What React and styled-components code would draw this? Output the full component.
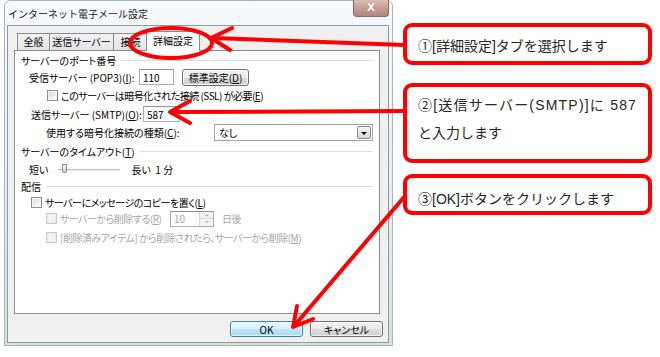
import React from 'react'
import styled, { createGlobalStyle } from 'styled-components'

const GlobalStyle = createGlobalStyle`
  html, body { margin: 0; padding: 0; background: #fff; }
  body { font-family: "Noto Sans CJK JP", "Noto Sans", sans-serif; }
`

const Page = styled.div`
  position: relative;
  width: 660px;
  height: 357px;
  display: flex;
  align-items: flex-start;
  overflow: hidden;
`

const Window = styled.div`
  width: 389px;
  height: 346px;
  margin-left: 4px;
  box-sizing: border-box;
  display: flex;
  flex-direction: column;
  border: 1px solid #a7b4bf;
  border-radius: 6px 6px 0 0;
  background: linear-gradient(180deg, #f6f9fb 0%, #eaf0f4 45%, #dde8ee 80%, #d4e5c9 100%);
`

const TitleBar = styled.div`
  height: 24px;
  display: flex;
  justify-content: space-between;
  align-items: flex-start;
  padding-left: 3px;
`

const Title = styled.span`
  margin-top: 6px;
  font-size: 10px;
  line-height: 14px;
  color: #1b1b1b;
`

const CloseButton = styled.div`
  width: 36px;
  height: 17px;
  margin: -1px 3px 0 0;
  box-sizing: border-box;
  border: 1px solid #8c6a64;
  border-top: none;
  border-radius: 0 0 4px 4px;
  background: linear-gradient(180deg, #dcbdb6 0%, #c89d94 50%, #b3867c 100%);
  color: #fff;
  font: bold 11px/15px "DejaVu Sans", sans-serif;
  text-align: center;
  text-shadow: 0 0 1px #6d4a44;
`

const Client = styled.div`
  flex: 1;
  margin: 0 3px 2px 2px;
  border: 1px solid #8d99a4;
  background: #f0f0f0;
  display: flex;
  flex-direction: column;
  font-feature-settings: "palt";
`

const TabStrip = styled.div`
  position: relative;
  z-index: 2;
  height: 25px;
  box-sizing: border-box;
  display: flex;
  align-items: flex-end;
  padding-left: 9px;
`

const Tab = styled.div`
  box-sizing: border-box;
  width: ${p => p.w}px;
  height: ${p => (p.active ? 20 : 17)}px;
  margin-left: ${p => (p.active ? -2 : p.first ? 0 : -1)}px;
  margin-bottom: ${p => (p.active ? 0 : 1)}px;
  border: 1px solid #898c95;
  border-bottom: none;
  background: ${p => (p.active ? '#fff' : 'linear-gradient(180deg, #f3f3f3, #e4e4e4)')};
  font-size: 10px;
  line-height: ${p => (p.active ? 18 : 16)}px;
  text-align: center;
  color: #000;
`

const Panel = styled.div`
  position: relative;
  z-index: 1;
  height: 264px;
  margin: -1px 8px 0 6px;
  box-sizing: border-box;
  border: 1px solid #898c95;
  background: #fff;
  padding: 1px 6px 0 6px;
`

const Row = styled.div`
  display: flex;
  align-items: center;
  height: ${p => p.h}px;
  padding-left: ${p => p.indent || 0}px;
  font-size: 10px;
  letter-spacing: ${p => (p.tight ? '-0.5px' : 'normal')};
  color: ${p => (p.disabled ? '#a6a6a6' : '#000')};
  white-space: nowrap;
`

const GroupHead = styled(Row)`
  &::after {
    content: '';
    flex: 1;
    height: 1px;
    margin-left: 5px;
    background: #d5dfe5;
  }
`

const Label = styled.span`
  display: inline-block;
  flex: none;
  width: ${p => p.w}px;
`

const U = styled.span`
  text-decoration: underline;
`

const TextBox = styled.div`
  box-sizing: border-box;
  width: ${p => p.w}px;
  height: 16px;
  padding-left: 3px;
  display: flex;
  align-items: center;
  border: 1px solid #abadb3;
  border-top-color: #8e9096;
  background: #fff;
  color: ${p => (p.disabled ? '#a6a6a6' : '#000')};
  font-size: 10px;
  letter-spacing: normal;
  position: relative;
`

const PushButton = styled.div`
  box-sizing: border-box;
  width: ${p => p.w}px;
  height: ${p => p.h || 17}px;
  margin-left: ${p => p.ml || 0}px;
  border: 1px solid ${p => (p.primary ? '#3c7fb1' : '#707070')};
  border-radius: 3px;
  background: ${p =>
    p.primary
      ? 'linear-gradient(180deg, #eaf6fd 0%, #d9f0fc 50%, #bee6fd 51%, #a7d9f5 100%)'
      : 'linear-gradient(180deg, #f2f2f2 0%, #ebebeb 50%, #dddddd 51%, #cfcfcf 100%)'};
  box-shadow: inset 0 0 0 1px rgba(255, 255, 255, 0.7);
  font-size: 10px;
  display: flex;
  align-items: center;
  justify-content: center;
  color: #000;
`

const Check = styled.span`
  box-sizing: border-box;
  width: 11px;
  height: 11px;
  margin-right: 3px;
  flex: none;
  border: 1px solid ${p => (p.disabled ? '#c9c9c9' : '#8f8f8f')};
  background: ${p =>
    p.disabled ? '#f4f4f4' : 'linear-gradient(135deg, #d6d6d6 0%, #f0f0f0 60%, #fff 100%)'};
  box-shadow: inset 0 0 0 1px ${p => (p.disabled ? '#ececec' : '#f4f4f4')};
`

const Select = styled.div`
  box-sizing: border-box;
  width: 159px;
  height: 17px;
  display: flex;
  align-items: center;
  justify-content: space-between;
  padding: 0 1px 0 4px;
  border: 1px solid #a5a5a5;
  background: #fff;
  font-size: 10px;
`

const DropArrow = styled.span`
  box-sizing: border-box;
  width: 14px;
  height: 13px;
  border: 1px solid #8b8b8b;
  border-radius: 2px;
  background: linear-gradient(180deg, #f4f4f4, #d8d8d8);
  display: flex;
  align-items: center;
  justify-content: center;
  &::after {
    content: '';
    margin-top: 2px;
    border-left: 3px solid transparent;
    border-right: 3px solid transparent;
    border-top: 3px solid #000;
  }
`

const Spin = styled.span`
  position: absolute;
  right: 0;
  top: 0;
  bottom: 0;
  width: 13px;
  display: flex;
  flex-direction: column;
  border-left: 1px solid #d4d4d4;
`

const SpinHalf = styled.span`
  flex: 1;
  background: #f3f3f3;
  border-bottom: ${p => (p.top ? '1px solid #dcdcdc' : 'none')};
  display: flex;
  align-items: center;
  justify-content: center;
  &::after {
    content: '';
    border-left: 2px solid transparent;
    border-right: 2px solid transparent;
    ${p => (p.top ? 'border-bottom: 2px solid #b5b5b5;' : 'border-top: 2px solid #b5b5b5;')}
  }
`

const Slider = styled.div`
  position: relative;
  width: 62px;
  height: 14px;
  margin: 0 11px 0 10px;
  &::before {
    content: '';
    position: absolute;
    left: 0;
    right: 0;
    top: 6px;
    height: 1px;
    background: #b9b9b9;
    border-bottom: 1px solid #eee;
  }
`

const Thumb = styled.span`
  position: absolute;
  left: 4px;
  top: 1px;
  width: 5px;
  height: 9px;
  box-sizing: border-box;
  border: 1px solid #8c8c8c;
  border-radius: 1px 1px 3px 3px;
  background: linear-gradient(180deg, #f4f4f4, #d6d6d6);
`

const ButtonRow = styled.div`
  display: flex;
  justify-content: flex-end;
  gap: 7px;
  padding: 7px 5px 0 0;
`

const Notes = styled.div`
  display: flex;
  flex-direction: column;
  width: 249px;
  margin-left: 10px;
  padding-top: 23px;
  font-family: "Liberation Sans", "Noto Sans CJK JP", sans-serif;
`

const Note = styled.div`
  box-sizing: border-box;
  height: ${p => p.h}px;
  margin-top: ${p => p.mt || 0}px;
  padding: ${p => p.pt}px 8px 0 11px;
  border: 4px solid #ff0000;
  border-radius: 9px;
  background: #fff;
  font-size: 14px;
  line-height: ${p => p.lh || 20}px;
  color: #262626;
  white-space: nowrap;
`

const WideLine = styled.span`
  letter-spacing: 1.2px;
`

const Overlay = styled.svg`
  position: absolute;
  z-index: 10;
  left: 0;
  top: 0;
  pointer-events: none;
`

const App = () => {
  return (
    <Page>
      <GlobalStyle />

      <Window>
        <TitleBar>
          <Title>インターネット電子メール設定</Title>
          <CloseButton>X</CloseButton>
        </TitleBar>

        <Client>
          <TabStrip>
            <Tab w={33} first>全般</Tab>
            <Tab w={65}>送信サーバー</Tab>
            <Tab w={35}>接続</Tab>
            <Tab w={54} active>詳細設定</Tab>
          </TabStrip>

          <Panel>
            <GroupHead h={16}>サーバーのポート番号</GroupHead>

            <Row h={18} indent={8}>
              <Label w={110}>受信サーバー (POP3)(<U>I</U>):</Label>
              <TextBox w={35}>110</TextBox>
              <PushButton w={67} ml={8}>標準設定(<U>D</U>)</PushButton>
            </Row>

            <Row h={19} indent={26} tight>
              <Check />
              このサーバーは暗号化された接続 (SSL) が必要(<U>E</U>)
            </Row>

            <Row h={18} indent={10}>
              <Label w={112}>送信サーバー (SMTP)(<U>O</U>):</Label>
              <TextBox w={37}>587</TextBox>
            </Row>

            <Row h={18} indent={25}>
              <Label w={168}>使用する暗号化接続の種類(<U>C</U>):</Label>
              <Select>
                なし
                <DropArrow />
              </Select>
            </Row>

            <GroupHead h={20}>サーバーのタイムアウト(<U>T</U>)</GroupHead>

            <Row h={17} indent={8}>
              <span>短い</span>
              <Slider>
                <Thumb />
              </Slider>
              <span>長い&nbsp;&nbsp;1 分</span>
            </Row>

            <GroupHead h={16}>配信</GroupHead>

            <Row h={16} indent={10} tight>
              <Check />
              サーバーにメッセージのコピーを置く(<U>L</U>)
            </Row>

            <Row h={17} indent={25} disabled tight>
              <Check disabled />
              <Label w={110}>サーバーから削除する(<U>R</U>)</Label>
              <TextBox w={44} disabled>
                10
                <Spin>
                  <SpinHalf top />
                  <SpinHalf />
                </Spin>
              </TextBox>
              <span style={{ marginLeft: 8 }}>日後</span>
            </Row>

            <Row h={20} indent={25} disabled tight>
              <Check disabled />
              [削除済みアイテム] から削除されたら、サーバーから削除(<U>M</U>)
            </Row>
          </Panel>

          <ButtonRow>
            <PushButton w={73} h={16} primary>OK</PushButton>
            <PushButton w={73} h={16}>キャンセル</PushButton>
          </ButtonRow>
        </Client>
      </Window>

      <Notes>
        <Note h={42} pt={9}>①[詳細設定]タブを選択します</Note>
        <Note h={80} mt={18} pt={4} lh={28}>
          <WideLine>②[送信サーバー(SMTP)]に 587</WideLine>
          <br />
          と入力します
        </Note>
        <Note h={41} mt={11} pt={11}>③[OK]ボタンをクリックします</Note>
      </Notes>

      <Overlay width="660" height="357" viewBox="0 0 660 357">
        <g fill="none" stroke="#ff0000" strokeWidth="4" strokeLinecap="round" strokeLinejoin="round">
          <ellipse cx="171" cy="43" rx="41" ry="15" />
          <path d="M405 45 L212 38" />
          <path d="M232 28 L211 38 L230 50" />
          <path d="M405 111 L172 112" />
          <path d="M190 101 L170 112 L190 123" />
          <path d="M405 196 L294 326" />
          <path d="M297 306 L293 327 L313 319" />
        </g>
      </Overlay>
    </Page>
  )
}

export default App
